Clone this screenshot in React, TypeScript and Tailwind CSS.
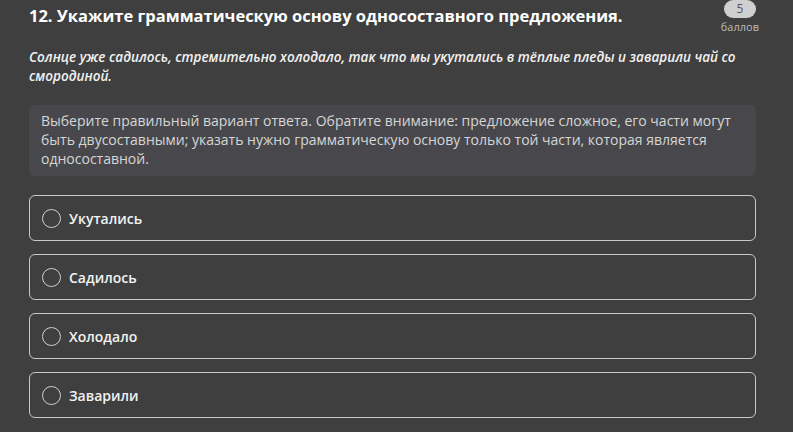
import { useState } from "react";

const options = ["Укутались", "Садилось", "Холодало", "Заварили"];

export default function App() {
  const [selected, setSelected] = useState<string | null>(null);

  return (
    <div
      className="min-h-screen w-full bg-[#3f3f3f] text-white"
      style={{ fontFamily: '"Open Sans", "Noto Sans", sans-serif' }}
    >
      <div className="pl-[29px] pr-[37px] pt-[3px]">
        <div className="flex items-start justify-between">
          <h1 className="text-[16.5px] font-bold leading-[26px] text-white">
            12. Укажите грамматическую основу односоставного предложения.
          </h1>
          <div className="flex flex-col items-center -mr-[3px] -mt-[3px]">
            <div className="flex h-[18px] w-[32px] items-center justify-center rounded-full bg-[#cfcfcf] text-[12px] leading-none text-[#555]">
              5
            </div>
            <div className="mt-[3px] text-[11px] leading-[12px] text-[#bdbdbd]">баллов</div>
          </div>
        </div>

        <p className="mt-[15px] text-[13.5px] font-semibold italic leading-[19px] text-[#f2f2f2]">
          Солнце уже садилось, стремительно холодало, так что мы укутались в тёплые пледы и заварили чай со смородиной.
        </p>

        <div className="mt-[19px] rounded-[6px] bg-[#48484c] px-[12px] pt-[6px] pb-[8px]">
          <p className="text-[14px] leading-[19px] text-[#d6d6d6]">
            Выберите правильный вариант ответа. Обратите внимание: предложение сложное, его части могут быть двусоставными; указать нужно грамматическую основу только той части, которая является односоставной.
          </p>
        </div>

        <div className="mt-[19px] flex flex-col gap-[13px]">
          {options.map((o) => (
            <button
              key={o}
              onClick={() => setSelected(o)}
              className="flex h-[46px] w-full items-center gap-[8px] rounded-[6px] border border-[#c8c8c8] px-[12px] text-left"
            >
              <span className="flex h-[19px] w-[19px] items-center justify-center rounded-full border-[1.5px] border-[#cfcfcf]">
                {selected === o && <span className="h-[9px] w-[9px] rounded-full bg-white" />}
              </span>
              <span className="text-[14px] font-semibold text-[#f2f2f2]">{o}</span>
            </button>
          ))}
        </div>
      </div>
    </div>
  );
}
